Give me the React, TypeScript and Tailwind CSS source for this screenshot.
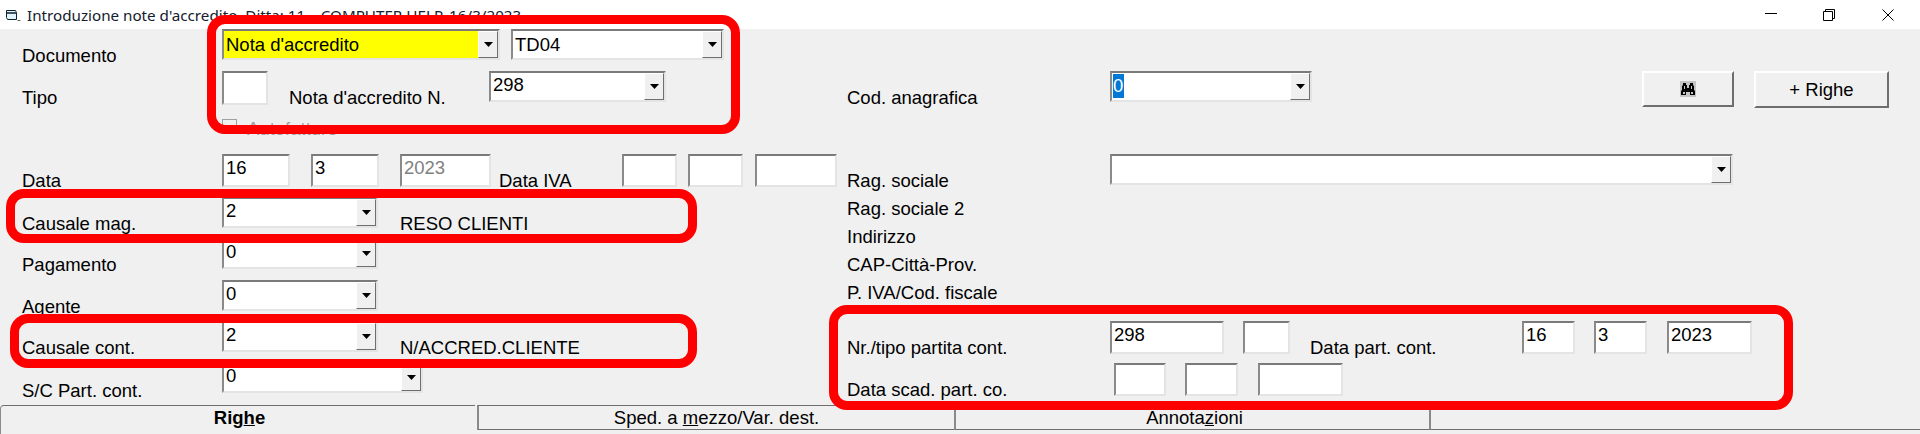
const LABEL = "shrink-0 pt-[17px] text-[18.5px] leading-[19px] text-black";

function Arrow() {
  return (
    <svg width="9" height="5" viewBox="0 0 9 5" className="block">
      <path d="M0 0h9L4.5 5z" fill="#000" />
    </svg>
  );
}

function Combo({ width, value, yellow, selected, tall }: { width: string; value?: string; yellow?: boolean; selected?: boolean; tall?: boolean }) {
  return (
    <div className={`flex h-[31px] shrink-0 border-2 border-t-[#7a7a7a] border-l-[#8a8a8a] border-r-[#e4e4e4] border-b-[#e4e4e4] bg-white ${width}`}>
      <div className={`min-w-0 flex-1 pl-[2px] text-[18.5px] text-black ${tall ? "leading-[28px]" : "leading-[24px]"} ${yellow ? "bg-[#ffff00]" : ""}`}>
        {selected ? <span className="-ml-[1px] mt-[1px] inline-block h-[24px] w-[11px] bg-[#0078d7] text-white">{value}</span> : value}
      </div>
      <div className="flex w-[20px] shrink-0 items-center justify-center border border-t-white border-l-white border-r-[#6e6e6e] border-b-[#6e6e6e] bg-[#f0f0f0]">
        <Arrow />
      </div>
    </div>
  );
}

function Field({ width, value, muted, className = "" }: { width: string; value?: string; muted?: boolean; className?: string }) {
  return (
    <div className={`h-[33px] shrink-0 border-2 border-t-[#7a7a7a] border-l-[#8a8a8a] border-r-[#e4e4e4] border-b-[#e4e4e4] bg-white pl-[2px] text-[18.5px] leading-[24px] ${muted ? "text-[#808080]" : "text-black"} ${width} ${className}`}>
      {value}
    </div>
  );
}

function Binoculars() {
  return (
    <svg width="16" height="16" viewBox="0 0 16 16" className="block bg-[#c4c4c4]">
      <path d="M3 2h3v2h1v3h2V4h1V2h3v2l1 1v4l1 1v4H10v-3H6v3H1v-4l1-1V5l1-1z" fill="#000" />
      <path d="M3 11h2v2H3zM11 11h2v2h-2zM4 5h1v3H4zM11 5h1v3h-1z" fill="#c4c4c4" />
    </svg>
  );
}

function TitleBar() {
  return (
    <div className="flex h-[29px] shrink-0 items-center bg-white pl-[5px]">
      <svg width="16" height="13" viewBox="0 0 16 13" className="mr-[6px] mt-[1px] shrink-0">
        <path d="M1.5 1.5h9l1 2v7h-9l-1-2z" fill="#dff3fa" stroke="#10202c" />
        <path d="M1 4h10" stroke="#10202c" strokeWidth="1.5" />
        <path d="M12.5 11.5h3" stroke="#666" />
      </svg>
      <span className="font-['Noto_Sans',sans-serif] text-[15.2px] leading-[20px] text-[#14202c]">
        Introduzione note d'accredito. Ditta: 11 – COMPUTER HELP. 16/3/2023
      </span>
      <div className="ml-auto mr-[26px] flex items-center gap-[46px]">
        <svg width="12" height="12" viewBox="0 0 12 12" className="block"><path d="M0 4.5h12" stroke="#000" /></svg>
        <svg width="12" height="12" viewBox="0 0 12 12" className="block"><path d="M.5 2.5h9v9h-9zM2.5 2.5v-2h9v9h-2" fill="none" stroke="#000" /></svg>
        <svg width="12" height="12" viewBox="0 0 12 12" className="ml-[1px] block"><path d="M.5.5l11 11M11.5.5l-11 11" stroke="#000" /></svg>
      </div>
    </div>
  );
}

function LeftColumn() {
  return (
    <div className="w-[847px] shrink-0 pl-[22px]">
      <div className="flex h-[42px]">
        <div className={`${LABEL} w-[200px]`}>Documento</div>
        <Combo width="w-[278px]" value="Nota d'accredito" yellow tall />
        <div className="w-[11px]" />
        <Combo width="w-[213px]" value="TD04" tall />
      </div>
      <div className="flex h-[42px]">
        <div className={`${LABEL} w-[200px]`}>Tipo</div>
        <Field width="w-[46px] h-[34px]" />
        <div className={`${LABEL} ml-[21px] w-[200px]`}>Nota d'accredito N.</div>
        <Combo width="w-[177px]" value="298" />
      </div>
      <div className="flex h-[41px] pl-[200px] pt-[6px]">
        <div className="h-[15px] w-[15px] border border-[#a0a0a0]" />
        <span className="ml-[10px] text-[18.5px] leading-[19px] text-[#a0a0a0]">Autofatture</span>
      </div>
      <div className="flex h-[43px]">
        <div className={`${LABEL} w-[200px]`}>Data</div>
        <Field width="w-[68px]" value="16" />
        <Field width="w-[68px]" value="3" className="ml-[21px]" />
        <Field width="w-[91px]" value="2023" muted className="ml-[21px]" />
        <div className={`${LABEL} ml-[8px] w-[123px]`}>Data IVA</div>
        <Field width="w-[55px]" />
        <Field width="w-[55px]" className="ml-[11px]" />
        <Field width="w-[82px]" className="ml-[12px]" />
      </div>
      <div className="flex h-[41px]">
        <div className={`${LABEL} w-[200px]`}>Causale mag.</div>
        <Combo width="w-[156px]" value="2" />
        <div className={`${LABEL} ml-[22px]`}>RESO CLIENTI</div>
      </div>
      <div className="flex h-[42px]">
        <div className={`${LABEL} w-[200px]`}>Pagamento</div>
        <Combo width="w-[156px]" value="0" />
      </div>
      <div className="flex h-[41px]">
        <div className={`${LABEL} w-[200px]`}>Agente</div>
        <Combo width="w-[156px]" value="0" />
      </div>
      <div className="flex h-[41px]">
        <div className={`${LABEL} w-[200px]`}>Causale cont.</div>
        <Combo width="w-[156px]" value="2" />
        <div className={`${LABEL} ml-[22px]`}>N/ACCRED.CLIENTE</div>
      </div>
      <div className="flex h-[43px]">
        <div className={`${LABEL} w-[200px] pt-[19px]`}>S/C Part. cont.</div>
        <Combo width="w-[201px]" value="0" />
      </div>
    </div>
  );
}

function RightColumn() {
  return (
    <div className="min-w-0 flex-1">
      <div className="h-[42px]" />
      <div className="flex h-[83px]">
        <div className={`${LABEL} w-[263px]`}>Cod. anagrafica</div>
        <Combo width="w-[202px]" value="0" selected />
        <button type="button" className="ml-[330px] flex h-[36px] w-[92px] items-center justify-center border-2 border-t-white border-l-white border-r-[#6e6e6e] border-b-[#6e6e6e] bg-[#f0f0f0]">
          <Binoculars />
        </button>
        <button type="button" className="ml-[20px] h-[37px] w-[135px] border-2 border-t-white border-l-white border-r-[#6e6e6e] border-b-[#6e6e6e] bg-[#f0f0f0] text-[18.5px] leading-[19px] text-black">
          + Righe
        </button>
      </div>
      <div className="flex h-[41px]">
        <div className={`${LABEL} w-[263px] pt-[16px]`}>Rag. sociale</div>
        <Combo width="w-[623px]" />
      </div>
      <div className="flex flex-col text-[18.5px] leading-[28px] text-black">
        <div>Rag. sociale 2</div>
        <div>Indirizzo</div>
        <div>CAP-Città-Prov.</div>
        <div>P. IVA/Cod. fiscale</div>
      </div>
      <div className="mt-[14px] flex h-[42px]">
        <div className={`${LABEL} w-[263px]`}>Nr./tipo partita cont.</div>
        <Field width="w-[114px]" value="298" />
        <Field width="w-[47px]" className="ml-[19px]" />
        <div className={`${LABEL} ml-[20px] w-[212px]`}>Data part. cont.</div>
        <Field width="w-[53px]" value="16" />
        <Field width="w-[53px]" value="3" className="ml-[19px]" />
        <Field width="w-[85px]" value="2023" className="ml-[20px]" />
      </div>
      <div className="flex h-[42px]">
        <div className={`${LABEL} w-[267px]`}>Data scad. part. co.</div>
        <Field width="w-[52px]" />
        <Field width="w-[53px]" className="ml-[19px]" />
        <Field width="w-[85px]" className="ml-[20px]" />
      </div>
    </div>
  );
}

function Tabs() {
  return (
    <div className="flex h-[29px] shrink-0 items-start text-[18.5px] leading-[23px] text-black">
      <div className="h-[29px] w-[475px] shrink-0 rounded-tl-[4px] border-l border-t border-[#8a8a8a] border-t-[#6e6e6e] pl-[3px] text-center font-bold">
        Rig<span className="underline">h</span>e
      </div>
      <div className="ml-[2px] h-[25px] w-[477px] shrink-0 border-y border-l-2 border-[#6e6e6e] border-l-[#8a8a8a] text-center">
        Sped. a <span className="underline">m</span>ezzo/Var. dest.
      </div>
      <div className="h-[25px] w-[477px] shrink-0 border-x-2 border-y border-[#6e6e6e] border-x-[#8a8a8a] pl-[4px] text-center">
        Annota<span className="underline">z</span>ioni
      </div>
      <div className="h-[25px] min-w-0 flex-1 border-b border-[#6e6e6e]" />
    </div>
  );
}

export default function App() {
  return (
    <div className="relative flex h-[434px] w-[1920px] flex-col overflow-hidden bg-[#f0f0f0] font-['Liberation_Sans',Arial,sans-serif]">
      <TitleBar />
      <div className="flex h-[376px] shrink-0">
        <LeftColumn />
        <RightColumn />
      </div>
      <Tabs />

      {/* red annotations drawn over the form */}
      <div className="absolute left-[207px] top-[15px] h-[119px] w-[533px] rounded-[18px] border-[9px] border-[#ff0000]" />
      <div className="absolute left-[6px] top-[189px] h-[54px] w-[691px] rounded-[18px] border-[9px] border-[#ff0000]" />
      <div className="absolute left-[10px] top-[314px] h-[54px] w-[687px] rounded-[18px] border-[9px] border-[#ff0000]" />
      <div className="absolute left-[829px] top-[305px] h-[105px] w-[964px] rounded-[18px] border-[9px] border-[#ff0000]" />
    </div>
  );
}
